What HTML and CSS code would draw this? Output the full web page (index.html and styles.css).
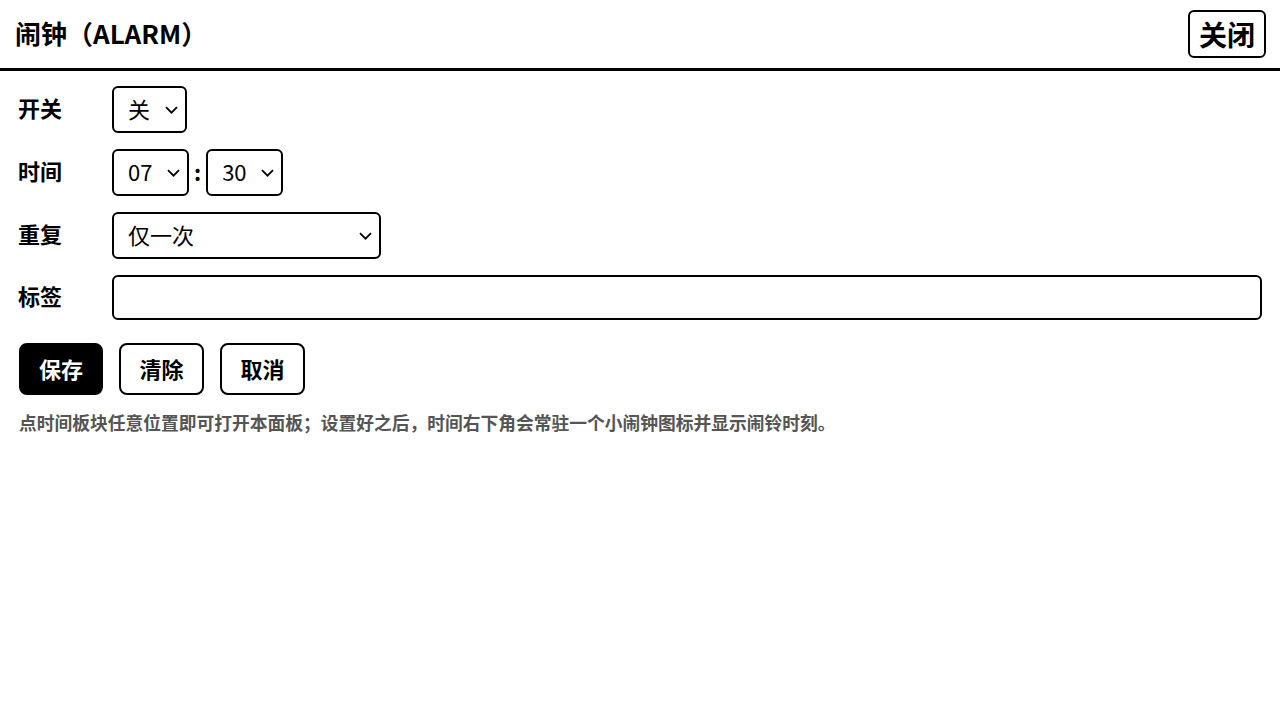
FILE: index.html
```html
<!DOCTYPE html>
<html lang="zh-CN">
<head>
  <meta charset="UTF-8">
  <meta name="viewport" content="width=device-width, initial-scale=1.0">
  <title>闹钟</title>
  <link rel="stylesheet" href="styles.css">
</head>
<body>
  <!-- Header -->
  <div class="header">
    <h1>闹钟（ALARM）</h1>
    <button class="close-btn">关闭</button>
  </div>

  <!-- Alarm form -->
  <div class="panel">
    <div class="row">
      <label class="row-label">开关</label>
      <select class="field">
        <option>关</option>
        <option>开</option>
      </select>
    </div>

    <div class="row">
      <label class="row-label">时间</label>
      <div class="time">
        <select class="field">
          <option>07</option>
        </select>
        <span class="colon">:</span>
        <select class="field">
          <option>30</option>
        </select>
      </div>
    </div>

    <div class="row">
      <label class="row-label">重复</label>
      <select class="field repeat">
        <option>仅一次</option>
        <option>每天</option>
        <option>工作日</option>
        <option>周末</option>
      </select>
    </div>

    <div class="row">
      <label class="row-label">标签</label>
      <input class="field tag" type="text">
    </div>

    <div class="actions">
      <button class="btn primary">保存</button>
      <button class="btn">清除</button>
      <button class="btn">取消</button>
    </div>

    <p class="hint">点时间板块任意位置即可打开本面板；设置好之后，时间右下角会常驻一个小闹钟图标并显示闹铃时刻。</p>
  </div>
</body>
</html>
```

FILE: styles.css
```css
/* General */
body {
  margin: 0;
  padding: 0;
  font-family: "Noto Sans CJK SC", "Noto Sans", sans-serif;
  background-color: white;
  color: black;
}

/* Header */
.header {
  display: flex;
  justify-content: space-between;
  align-items: center;
  height: 68px;
  padding: 0 14px 0 15px;
  border-bottom: 3px solid black;
}

.header h1 {
  margin: 0 0 3px 0;
  font-size: 26px;
  font-weight: bold;
}

.close-btn {
  font-family: inherit;
  font-size: 28px;
  font-weight: bold;
  line-height: 40px;
  padding: 2px 9px;
  background-color: white;
  color: black;
  border: 2px solid black;
  border-radius: 6px;
  cursor: pointer;
}

/* Form */
.panel {
  padding: 15px 18px;
}

.row {
  display: flex;
  align-items: center;
  margin-bottom: 16px;
}

.row-label {
  width: 94px;
  flex-shrink: 0;
  font-size: 22px;
  font-weight: bold;
  padding-bottom: 5px;
}

.field {
  font-family: inherit;
  font-size: 22px;
  color: black;
  background-color: white;
  border: 2px solid black;
  border-radius: 6px;
  height: 47px;
  padding: 0 34px 3px 14px;
}

/* chevron drawn in place of the native arrow */
select.field {
  appearance: none;
  -webkit-appearance: none;
  background-image: url("data:image/svg+xml,%3Csvg xmlns='http://www.w3.org/2000/svg' width='13' height='8' viewBox='0 0 13 8'%3E%3Cpolyline points='1,1.2 6.5,6.7 12,1.2' fill='none' stroke='black' stroke-width='1.8'/%3E%3C/svg%3E");
  background-repeat: no-repeat;
  background-position: right 7px center;
  background-size: 13px 8px;
}

.time {
  display: flex;
  align-items: center;
}

.colon {
  font-size: 22px;
  font-weight: bold;
  margin: 0 5px 3px 5px;
}

.repeat {
  width: 269px;
}

.tag {
  flex: 1;
  height: 45px;
  box-sizing: border-box;
  padding: 0 14px;
}

/* Buttons */
.actions {
  display: flex;
  gap: 16px;
  margin-top: 23px;
  padding-left: 1px;
}

.btn {
  font-family: inherit;
  font-size: 22px;
  font-weight: bold;
  height: 52px;
  width: 85px;
  padding: 0 0 2px 0;
  background-color: white;
  color: black;
  border: 2px solid black;
  border-radius: 8px;
  cursor: pointer;
}

.btn.primary {
  width: 84px;
  background-color: black;
  color: white;
}

.hint {
  margin: 14px 0 0 1px;
  font-size: 17.75px;
  font-weight: bold;
  color: #555;
}
```
